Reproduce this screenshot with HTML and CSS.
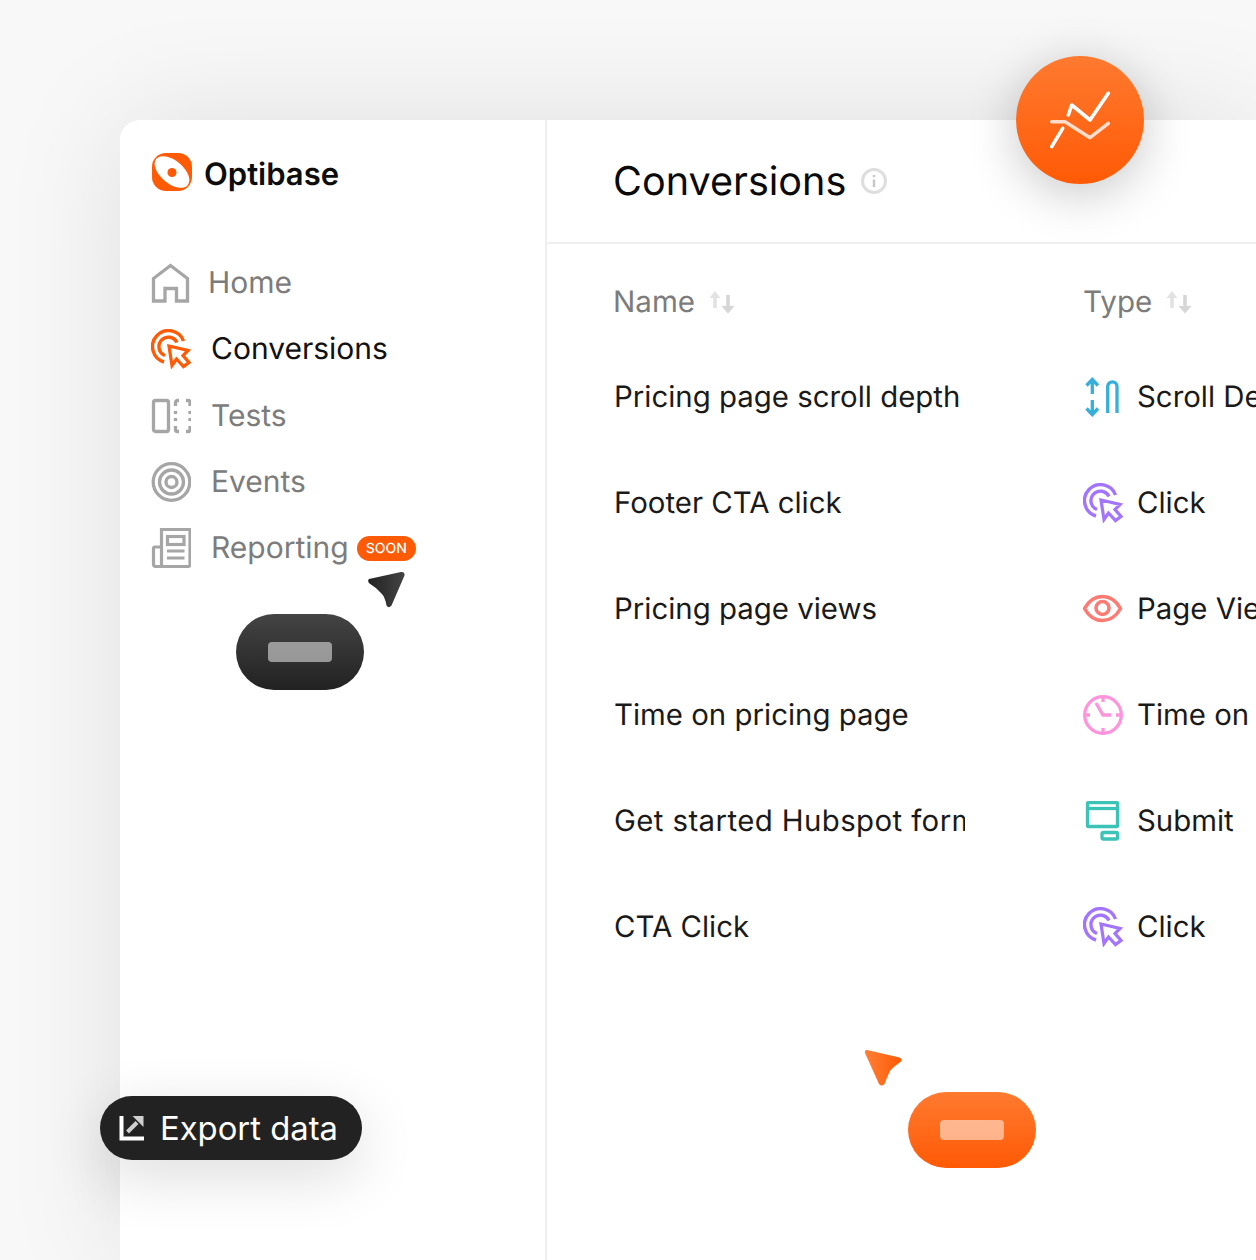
FILE: index.html
```html
<!DOCTYPE html>
<html lang="en">
<head>
    <meta charset="UTF-8">
    <title>Optibase - Conversions</title>
    <link rel="stylesheet" href="styles.css">
</head>
<body>
    <svg class="sprites" width="0" height="0">
        <defs>
            <linearGradient id="orangeGrad" x1="0" y1="0" x2="1" y2="0">
                <stop offset="0" stop-color="#ff7f36"/>
                <stop offset="1" stop-color="#ff5a05"/>
            </linearGradient>
            <linearGradient id="darkGrad" x1="0" y1="0" x2="1" y2="0">
                <stop offset="0" stop-color="#222"/>
                <stop offset="1" stop-color="#444"/>
            </linearGradient>
            <symbol id="click" viewBox="0 0 40 40">
                <path d="M13 33A16 16 0 1 1 32.500 12" fill="none" stroke="currentColor" stroke-width="3.400"/>
                <path d="M14 26.500A9.500 9.500 0 1 1 26 13.500" fill="none" stroke="currentColor" stroke-width="3.400"/>
                <path d="M18 17L37 21.500L32 26.500L38 33.500L32.500 37.500L25.500 30L21 36.500Z" fill="none" stroke="currentColor" stroke-width="3.200"/>
            </symbol>
            <symbol id="sort" viewBox="0 0 26 24">
                <path d="M6 5V18" stroke="#e2e2e2" stroke-width="3.600"/>
                <path d="M.5 8L6 1L11.500 8Z" fill="#e2e2e2"/>
                <path d="M19 5V19" stroke="#d6d6d6" stroke-width="3.600"/>
                <path d="M12.500 16L19 23.500L25.500 16Z" fill="#d6d6d6"/>
            </symbol>
        </defs>
    </svg>

    <div class="app">
        <aside class="sidebar">
            <div class="brand">
                <svg width="40" height="38" viewBox="0 0 40 38">
                    <rect width="40" height="38" rx="14" fill="#ff5a05"/>
                    <ellipse cx="20" cy="19" rx="20.500" ry="11.500" transform="rotate(40 20 19)" fill="#fff"/>
                    <circle cx="20" cy="19.500" r="4.500" fill="#ff5a05"/>
                </svg>
                <span class="brand-name">Optibase</span>
            </div>

            <nav class="nav">
                <a class="nav-item nav-home">
                    <svg width="40" height="40" viewBox="0 0 40 40" fill="none" stroke="#a6a6a6" stroke-width="3.300">
                        <path d="M2.500 38V15.500L19.500 2.500L36.500 15.500V38H25.500V25.500H14V38Z"/>
                    </svg>
                    <span>Home</span>
                </a>
                <a class="nav-item nav-active">
                    <svg class="icon-orange" width="40" height="40"><use href="#click"/></svg>
                    <span>Conversions</span>
                </a>
                <a class="nav-item">
                    <svg width="40" height="40" viewBox="0 0 40 40" fill="none" stroke="#a6a6a6" stroke-width="3.300">
                        <rect x="2.500" y="4.500" width="15" height="31" rx="2"/>
                        <path d="M28 4.500H26A2 2 0 0 0 24.500 6.500V10M35 4.500H37A2 2 0 0 1 39 6.500V10M24.500 30V33.500A2 2 0 0 0 26 35.500H28M39 30V33.500A2 2 0 0 1 37 35.500H35"/>
                        <path d="M24.500 15V18M24.500 22V25M39 15V18M39 22V25"/>
                    </svg>
                    <span>Tests</span>
                </a>
                <a class="nav-item">
                    <svg width="40" height="40" viewBox="0 0 40 40" fill="none" stroke="#a6a6a6" stroke-width="3.300">
                        <circle cx="20.500" cy="20" r="18.300"/>
                        <circle cx="20.500" cy="20" r="12"/>
                        <circle cx="20.500" cy="20" r="5.500"/>
                    </svg>
                    <span>Events</span>
                </a>
                <a class="nav-item">
                    <svg width="40" height="40" viewBox="0 0 40 40" fill="none" stroke="#a6a6a6" stroke-width="3.200">
                        <path d="M10 19H4A1.500 1.500 0 0 0 2.500 20.500V36A2.500 2.500 0 0 0 5 38.500H37A2 2 0 0 0 39 36V1.500H10.500V36A2.500 2.500 0 0 1 5 38.500"/>
                        <rect x="16.500" y="8.500" width="16.500" height="8"/>
                        <path d="M16 23H33.500M16 30H33.500"/>
                    </svg>
                    <span>Reporting</span>
                    <span class="badge">SOON</span>
                </a>
            </nav>
        </aside>

        <main class="content">
            <header class="content-head">
                <h1>Conversions</h1>
                <svg width="28" height="28" viewBox="0 0 28 28" fill="none" stroke="#dedede" stroke-width="3">
                    <circle cx="14" cy="14" r="11.500"/>
                    <path d="M14 12.500V20" stroke="#c8c8c8" stroke-width="2.500"/>
                    <path d="M14 8V10.200" stroke="#c8c8c8" stroke-width="2.500"/>
                </svg>
            </header>

            <div class="table">
                <div class="row row-head">
                    <div class="cell cell-name">Name
                        <svg width="26" height="24"><use href="#sort"/></svg>
                    </div>
                    <div class="cell cell-type">Type
                        <svg width="26" height="24"><use href="#sort"/></svg>
                    </div>
                </div>

                <div class="row">
                    <div class="cell cell-name">Pricing page scroll depth</div>
                    <div class="cell cell-type">
                        <svg width="40" height="40" viewBox="0 0 40 40" fill="none" stroke="#36b0db" stroke-width="3.300">
                            <path d="M9.300 3V17M3.500 8.500L9.300 2.500L15 8.500M9.300 23V37M3.500 31.500L9.300 37.500L15 31.500"/>
                            <path d="M24.700 36V9.500A4.650 4.650 0 0 1 34 9.500V36"/>
                        </svg>
                        <span>Scroll Depth</span>
                    </div>
                </div>
                <div class="row">
                    <div class="cell cell-name">Footer CTA click</div>
                    <div class="cell cell-type">
                        <svg class="icon-purple" width="40" height="40"><use href="#click"/></svg>
                        <span>Click</span>
                    </div>
                </div>
                <div class="row">
                    <div class="cell cell-name">Pricing page views</div>
                    <div class="cell cell-type">
                        <svg width="40" height="40" viewBox="0 0 40 40" fill="none" stroke="#ff7a73" stroke-width="3.500">
                            <path d="M1.500 19.500C6 11.500 12.500 7.500 19.500 7.500S33 11.500 37.500 19.500C33 27.500 26.500 31.500 19.500 31.500S6 27.500 1.500 19.500Z"/>
                            <circle cx="19.500" cy="19" r="6.500"/>
                        </svg>
                        <span>Page Views</span>
                    </div>
                </div>
                <div class="row">
                    <div class="cell cell-name">Time on pricing page</div>
                    <div class="cell cell-type">
                        <svg width="40" height="40" viewBox="0 0 40 40" fill="none" stroke="#ff93dc" stroke-width="3.300">
                            <circle cx="20" cy="20" r="18.300"/>
                            <path d="M13 8L20 20H28"/>
                            <path d="M20 2V7M20 33V38M2 20H7M33 20H38"/>
                        </svg>
                        <span>Time on page</span>
                    </div>
                </div>
                <div class="row">
                    <div class="cell cell-name cell-spaced">Get started Hubspot form</div>
                    <div class="cell cell-type">
                        <svg width="40" height="40" viewBox="0 0 40 40" fill="none" stroke="#3cc3b8" stroke-width="3.300">
                            <rect x="4.500" y="1.500" width="30" height="24" rx="1"/>
                            <path d="M4.500 7.500H34.500"/>
                            <rect x="19" y="31.500" width="15.500" height="6.500" rx="1.500"/>
                        </svg>
                        <span>Submit</span>
                    </div>
                </div>
                <div class="row">
                    <div class="cell cell-name">CTA Click</div>
                    <div class="cell cell-type">
                        <svg class="icon-purple" width="40" height="40"><use href="#click"/></svg>
                        <span>Click</span>
                    </div>
                </div>
            </div>
        </main>
    </div>

    <!-- floating pieces on top of the app -->
    <div class="bubble">
        <svg width="64" height="60" viewBox="0 0 64 60" fill="none" stroke-width="3.600" stroke-linecap="round" stroke-linejoin="round">
            <path d="M3.700 56.700L14.700 38.300" stroke="#fff"/>
            <path d="M20.300 25L23.700 15L42 30L60.300 3.300" stroke="#fff"/>
            <path d="M3.700 31.700H17L42 47.700L60.300 33.300" stroke="#ffdccb"/>
        </svg>
    </div>

    <svg class="cursor cursor-dark" width="40" height="38" viewBox="0 0 40 38">
        <path d="M2 8L34 1Q38 .5 37.500 4.500L24.500 34.500Q21.500 38 19.500 34.500Q18 26 14.500 22.500Q10 17 2.500 12.500Q0 10 2 8Z" fill="url(#darkGrad)"/>
    </svg>
    <div class="pill pill-dark"><span class="pill-bar"></span></div>

    <button class="export">
        <svg width="26" height="26" viewBox="0 0 26 26" fill="none">
            <path d="M2.500 1V23.500H25" stroke="#fff" stroke-width="4"/>
            <path d="M8.500 17L18 7.500" stroke="#cfcfcf" stroke-width="4"/>
            <path d="M13.500 1H24.500V12Z" fill="#cfcfcf"/>
        </svg>
        <span>Export data</span>
    </button>

    <svg class="cursor cursor-orange" width="40" height="38" viewBox="0 0 40 38">
        <path d="M3 1L35.500 8.500Q39 10.500 36.500 13Q29 18 26 22Q23 28 20.500 35Q17.500 38 15 35L1 4Q.5 .5 3 1Z" fill="url(#orangeGrad)"/>
    </svg>
    <div class="pill pill-orange"><span class="pill-bar"></span></div>
</body>
</html>
```

FILE: styles.css
```css
html, body {
    margin: 0;
    padding: 0;
}

body {
    width: 1256px;
    height: 1260px;
    position: relative;
    overflow: hidden;
    background-color: #f8f8f8;
    font-family: Inter, "Liberation Sans", sans-serif;
    text-rendering: geometricPrecision;
    color: #111;
}

svg {
    flex-shrink: 0;
}

.sprites {
    position: absolute;
}

.app {
    display: flex;
    width: 1136px;
    height: 1140px;
    margin: 120px 0 0 120px;
    background-color: #fff;
    border-radius: 20px 0 0 0;
    box-shadow: 0 0 120px rgba(0, 0, 0, 0.1);
}

.sidebar {
    box-sizing: border-box;
    width: 427px;
    flex-shrink: 0;
    border-right: 2px solid #efefef;
    padding: 33px 0 0 31px;
}

.brand {
    display: flex;
    align-items: center;
    gap: 12px;
    height: 38px;
    padding-left: 1px;
}

.brand-name {
    font-size: 31px;
    font-weight: 600;
    color: #0d0d0d;
    line-height: 40px;
    margin-top: 6px;
}

.nav {
    display: flex;
    flex-direction: column;
    gap: 26.3px;
    margin-top: 72px;
}

.nav-item {
    display: flex;
    align-items: center;
    gap: 20px;
    height: 40px;
    font-size: 30px;
    color: #7c7c7c;
}

.nav-home {
    gap: 17px;
}

.nav-active {
    color: #111;
}

.icon-orange {
    color: #ff5a05;
}

.icon-purple {
    color: #a374ff;
}

.badge {
    margin-left: -12px;
    padding: 0 9px;
    height: 25px;
    line-height: 26px;
    font-size: 14px;
    font-weight: 500;
    color: #fff;
    background-color: #ff5a05;
    border-radius: 13px;
}

.content {
    flex: 1;
    min-width: 0;
}

.content-head {
    display: flex;
    align-items: center;
    gap: 14px;
    height: 122px;
    padding-left: 66px;
    border-bottom: 2px solid #efefef;
}

h1 {
    margin: 0;
    font-size: 39.6px;
    font-weight: 400;
    color: #0a0a0a;
}

.table {
    padding-left: 67px;
    padding-top: 15px;
}

.row {
    display: flex;
    align-items: center;
    height: 106px;
    font-size: 29.4px;
    color: #1a1a1a;
}

.row-head {
    height: 85px;
    color: #7c7c7c;
    margin-left: -1px;
    font-size: 29.6px;
}

.cell {
    display: flex;
    align-items: center;
    white-space: nowrap;
    overflow: hidden;
}

.cell-name {
    width: 351px;
    margin-right: 118px;
}

.cell-spaced {
    letter-spacing: 0.4px;
}

.row-head .cell-name {
    width: 470px;
    margin-right: 0;
}

.cell-type {
    flex: 1;
    min-width: 0;
    gap: 14px;
}

.row-head .cell-type,
.row-head .cell-name {
    gap: 14px;
}

/* floating stuff */
.bubble {
    position: absolute;
    left: 1016px;
    top: 56px;
    width: 128px;
    height: 128px;
    display: flex;
    align-items: center;
    justify-content: center;
    border-radius: 50%;
    background: linear-gradient(180deg, #ff7a30, #ff5a05);
    box-shadow: 0 10px 50px rgba(0, 0, 0, 0.22);
}

.cursor {
    position: absolute;
}

.cursor-dark {
    left: 367px;
    top: 571px;
}

.cursor-orange {
    left: 864px;
    top: 1049px;
}

.pill {
    position: absolute;
    width: 128px;
    height: 76px;
    display: flex;
    align-items: center;
    justify-content: center;
    border-radius: 38px;
}

.pill-dark {
    left: 236px;
    top: 614px;
    background: linear-gradient(180deg, #444, #222);
}

.pill-orange {
    left: 908px;
    top: 1092px;
    background: linear-gradient(180deg, #ff7a30, #ff5a05);
}

.pill-bar {
    width: 64px;
    height: 20px;
    border-radius: 4px;
    background-color: rgba(255, 255, 255, 0.5);
}

.export {
    position: absolute;
    left: 100px;
    top: 1096px;
    width: 262px;
    height: 64px;
    display: flex;
    align-items: center;
    gap: 15px;
    padding: 0 0 0 19px;
    border: none;
    border-radius: 32px;
    background-color: #222;
    color: #fff;
    font-family: Inter, "Liberation Sans", sans-serif;
    font-size: 32.8px;
    box-shadow: 0 16px 60px rgba(0, 0, 0, 0.14);
}
```
